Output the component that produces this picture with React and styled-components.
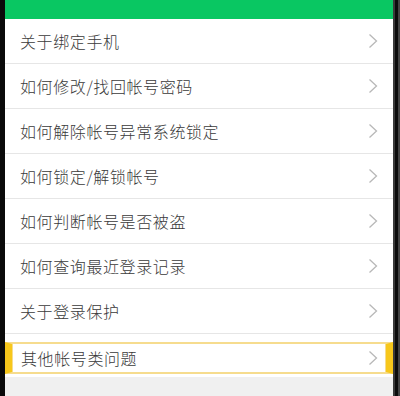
import React from 'react';
import styled, { createGlobalStyle } from 'styled-components';

const GlobalStyle = createGlobalStyle`
  html, body {
    margin: 0;
    padding: 0;
    background: #111;
  }
  body {
    font-family: "Noto Sans CJK SC", "Noto Sans", sans-serif;
  }
`;

const items = [
  '关于绑定手机',
  '如何修改/找回帐号密码',
  '如何解除帐号异常系统锁定',
  '如何锁定/解锁帐号',
  '如何判断帐号是否被盗',
  '如何查询最近登录记录',
  '关于登录保护',
];

const Frame = styled.div`
  display: flex;
  width: 400px;
  height: 396px;
  overflow: hidden;
`;

const LeftEdge = styled.div`
  width: 5px;
  background: #0a0a0a;
`;

const RightEdge = styled.div`
  width: 7px;
  background: linear-gradient(to right, #3a3a3a 0, #3a3a3a 2px, #0c0c0c 2px, #0c0c0c 5px, #444 5px);
`;

const Screen = styled.div`
  flex: 1;
  display: flex;
  flex-direction: column;
  background: #f0f0f0;
`;

const Header = styled.div`
  height: 19px;
  background: #09c762;
  flex-shrink: 0;
`;

const Row = styled.div`
  height: 44px;
  display: flex;
  align-items: center;
  justify-content: space-between;
  padding: 0 15px 0 15px;
  background: #fff;
  border-bottom: 1px solid #e6e6e6;
  flex-shrink: 0;
`;

const LastRow = styled.div`
  height: 43px;
  padding: 8px 0 3px;
  box-sizing: border-box;
  background: #fff;
  display: flex;
  flex-shrink: 0;
`;

const Highlight = styled.div`
  flex: 1;
  display: flex;
  align-items: center;
  justify-content: space-between;
  padding: 0 8px 0 9px;
  border-top: 2px solid #f6dc8e;
  border-bottom: 2px solid #f6dc8e;
  border-left: 7px solid #f7c71b;
  border-right: 7px solid #f7c71b;
  box-shadow: inset 1px 0 0 #f6dc8e, inset -1px 0 0 #f6dc8e;
`;

const Label = styled.span`
  font-size: 16px;
  font-weight: 300;
  letter-spacing: 0.6px;
  color: #3a3a3a;
  line-height: 1;
`;

const Chevron = () => (
  <svg width="10" height="16" viewBox="0 0 10 16" fill="none">
    <path d="M1.5 1.5 L8.5 8 L1.5 14.5" stroke="#b8b8b8" strokeWidth="1.3" />
  </svg>
);

export default function App() {
  return (
    <>
      <GlobalStyle />
      <Frame>
        <LeftEdge />
        <Screen>
          <Header />
          {items.map((t) => (
            <Row key={t}>
              <Label>{t}</Label>
              <Chevron />
            </Row>
          ))}
          <LastRow>
            <Highlight>
              <Label>其他帐号类问题</Label>
              <Chevron />
            </Highlight>
          </LastRow>
        </Screen>
        <RightEdge />
      </Frame>
    </>
  );
}
